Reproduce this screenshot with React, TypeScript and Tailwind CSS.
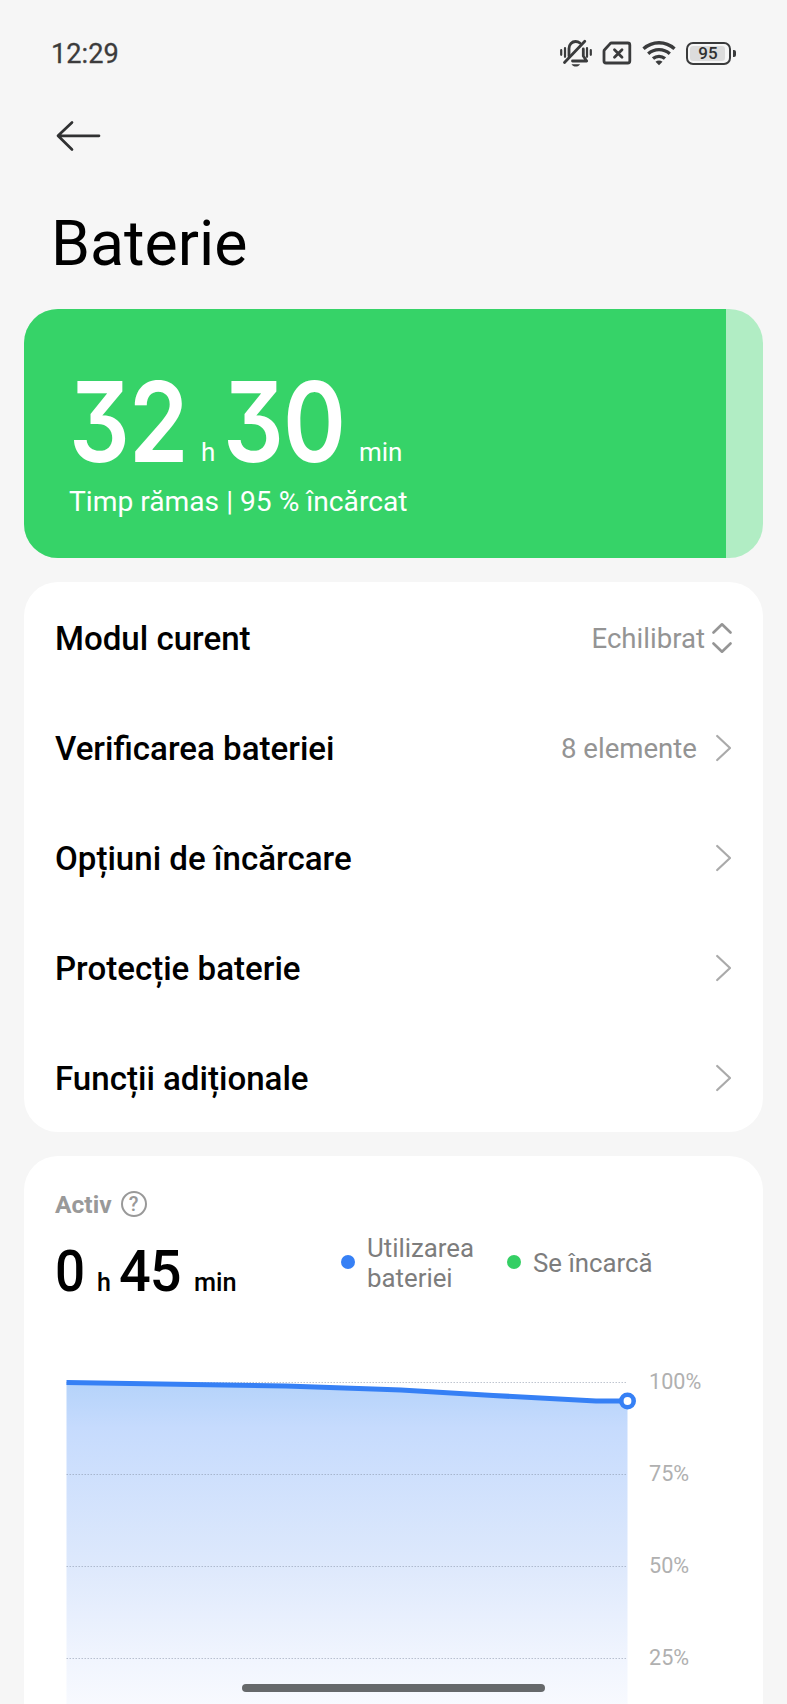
import type { ReactNode } from "react";

const ink = "#3a3b3c";

function MutedBell() {
  return (
    <svg width="34" height="30" viewBox="0 0 34 30" fill="none" stroke={ink} strokeLinecap="round">
      <path d="M2.2 12.2v4.6M6 10.2v8.6M28 10.2v8.6M31.8 12.2v4.6" strokeWidth="2.2" />
      <path d="M10 18V10.5c0-4 3-7 6.5-7 1.8 0 3.2.5 4.400 1.500" strokeWidth="2.8" />
      <path d="M13.500 23h14.200l-3.400-5V11" strokeWidth="2.8" strokeLinejoin="round" />
      <path d="M5.500 24.500L25.800 3.200" strokeWidth="2.8" />
      <path d="M12.500 26.200h8.600c-1 1.600-2.500 2.300-4.300 2.300s-3.300-.7-4.300-2.300z" fill={ink} stroke="none" />
    </svg>
  );
}

function NoSim() {
  return (
    <svg width="30" height="24" viewBox="0 0 30 24" fill="none" stroke={ink} strokeWidth="2.8">
      <path d="M9.600 2h16.200a2 2 0 0 1 2 2v16a2 2 0 0 1-2 2H4a2 2 0 0 1-2-2V10.200c0-.6.2-1 .6-1.400l5.600-6.200c.4-.4.9-.6 1.400-.6z" strokeLinejoin="round" />
      <path d="M12.500 8.800l7.500 7.500M20 8.800l-7.500 7.500" strokeWidth="2.8" strokeLinecap="round" />
    </svg>
  );
}

function Wifi() {
  return (
    <svg width="34" height="26" viewBox="0 0 34 26" fill="none" stroke={ink} strokeWidth="3.3">
      <path d="M1.500 8.800C10.300 .7 23.700 .7 32.500 8.800" />
      <path d="M6.200 13.800c6.200-5.600 15.400-5.600 21.600 0" />
      <path d="M11 18.600c3.500-3.100 8.500-3.100 12 0" />
      <path d="M13.500 21.700c2-1.700 5-1.700 7 0L17 25.300z" fill={ink} stroke="none" />
    </svg>
  );
}

function BatteryIcon() {
  return (
    <div className="flex items-center gap-[2px]">
      <div className="h-[23px] w-[45px] rounded-[7px] border-[2px] border-[#3a3b3c] p-[2px]">
        <div className="flex h-full w-[35px] items-center justify-center rounded-[3px] bg-[#dcdcdc] pl-[1px] text-[17px] font-medium leading-none text-[#303030]">
          95
        </div>
      </div>
      <div className="h-[7px] w-[3px] rounded-r-[2px] bg-[#3a3b3c]" />
    </div>
  );
}

function Chevron() {
  return (
    <svg className="mb-[2px] mr-[1px]" width="16" height="28" viewBox="0 0 16 28" fill="none" stroke="#aaaaaa" strokeWidth="2.2" strokeLinecap="round" strokeLinejoin="round">
      <path d="M2.200 2L15 14L2.200 26" />
    </svg>
  );
}

function UpDown() {
  return (
    <svg className="mb-[2px]" width="20" height="32" viewBox="0 0 20 32" fill="none" stroke="#959595" strokeWidth="2.6" strokeLinecap="round" strokeLinejoin="round">
      <path d="M1.500 10.500L10 2.300l8.500 8.200M1.500 21.500L10 29.700l8.500-8.200" />
    </svg>
  );
}

function Row({ label, children }: { label: string; children: ReactNode }) {
  return (
    <div className="flex h-[110px] items-center justify-between pt-[3px] pl-[31px] pr-[31px]">
      <span className="text-[33.1px] font-medium leading-[40px] text-black">{label}</span>
      <span className="flex items-center text-[27.6px] leading-[40px] text-[#949494]">{children}</span>
    </div>
  );
}

function BigNumber({ children }: { children: string }) {
  return (
    <span className="inline-block origin-left translate-y-[1px] scale-x-[0.86] font-['Inter'] text-[111px] font-semibold tracking-[-1px] [font-feature-settings:'cv09']">
      {children}
    </span>
  );
}

const levels = ["100%", "75%", "50%", "25%"];

function Chart() {
  return (
    <div className="flex">
      <svg width="584" height="333" viewBox="0 0 584 333" fill="none">
        <defs>
          <linearGradient id="usage" x1="0" y1="12" x2="0" y2="380" gradientUnits="userSpaceOnUse">
            <stop offset="0" stopColor="#b5d3fa" />
            <stop offset="0.12" stopColor="#c6dbfd" />
            <stop offset="0.5" stopColor="#dee9fc" />
            <stop offset="0.75" stopColor="#f1f5fe" />
            <stop offset="1" stopColor="#ffffff" />
          </linearGradient>
        </defs>
        <path d="M10.500 10.500C100 11.500 170 12.500 230 14C280 15.500 310 16.500 345 18C400 21.500 490 26.500 540 29H571.500V333H10.500z" fill="url(#usage)" />
        {[10.5, 102.5, 194.5, 286.5].map((y) => (
          <path key={y} d={`M10.500 ${y}H571`} stroke="#7f8ba0" strokeOpacity="0.5" strokeWidth="1.2" strokeDasharray="1.5 1.5" />
        ))}
        <path d="M10.500 10.500C100 11.500 170 12.500 230 14C280 15.500 310 16.500 345 18C400 21.500 490 26.500 540 29H571" stroke="#3680f5" strokeWidth="5" />
        <circle cx="571.500" cy="29" r="6.200" fill="#fff" stroke="#3680f5" strokeWidth="4.600" />
      </svg>
      <div className="flex flex-col pl-[9px]">
        {levels.map((level) => (
          <span key={level} className="h-[92px] text-[21.6px] leading-[20px] text-[#b0b0b0]">{level}</span>
        ))}
      </div>
    </div>
  );
}

export default function App() {
  return (
    <div className="relative flex h-[1704px] w-[787px] flex-col overflow-hidden bg-[#f6f6f6] font-['Roboto',sans-serif]">
      <header className="flex h-[106px] shrink-0 items-center justify-between pl-[51px] pr-[51px]">
        <span className="pt-[2px] text-[27.2px] leading-[32px] text-[#3c3c3c] [-webkit-text-stroke:0.3px_#3c3c3c]">12:29</span>
        <div className="flex items-center">
          <MutedBell />
          <div className="ml-[9px]"><NoSim /></div>
          <div className="ml-[10px] mr-[10px]"><Wifi /></div>
          <BatteryIcon />
        </div>
      </header>

      <div className="flex h-[60px] shrink-0 items-center pl-[56px]">
        <svg width="45" height="32" viewBox="0 0 45 32" fill="none" stroke="#303132" strokeWidth="2.700" strokeLinecap="round" strokeLinejoin="round">
          <path d="M43 15.800H2.300M16 2.500L2 15.800L16 29.500" />
        </svg>
      </div>

      <h1 className="mt-[36px] h-[107px] shrink-0 pl-[51px] text-[62.6px] leading-[84px] text-black">Baterie</h1>

      <section className="mx-[24px] flex h-[249px] shrink-0 overflow-hidden rounded-[34px] bg-[#b1edc4]">
        <div className="flex w-[95%] flex-col bg-[#36d368] pl-[45px] pt-[60px] text-white">
          <div className="flex h-[104px] items-baseline leading-[104px]">
            <span className="w-[132px]"><BigNumber>32</BigNumber></span>
            <span className="w-[22px] text-[26px]">h</span>
            <span className="w-[136px]"><BigNumber>30</BigNumber></span>
            <span className="text-[26px]">min</span>
          </div>
          <p className="mt-[9px] text-[28.200px] leading-[40px]">Timp rămas | 95 % încărcat</p>
        </div>
      </section>

      <section className="mx-[24px] mt-[24px] shrink-0 rounded-[34px] bg-white">
        <Row label="Modul curent">
          <span className="mr-[7px]">Echilibrat</span>
          <UpDown />
        </Row>
        <Row label="Verificarea bateriei">
          <span className="mr-[18px]">8 elemente</span>
          <Chevron />
        </Row>
        <Row label="Opțiuni de încărcare"><Chevron /></Row>
        <Row label="Protecție baterie"><Chevron /></Row>
        <Row label="Funcții adiționale"><Chevron /></Row>
      </section>

      <section className="mx-[24px] mt-[24px] flex h-[580px] shrink-0 flex-col rounded-t-[34px] bg-white">
        <div className="flex pl-[31px] pt-[33px]">
          <div className="w-[286px]">
            <div className="flex h-[30px] items-center text-[24.6px] font-bold leading-[30px] text-[#999999]">
              <span className="pt-[1px]">Activ</span>
              <span className="mb-[1px] ml-[9px] flex h-[26px] w-[26px] items-center justify-center rounded-full border-[2px] border-[#999999] text-[20px] font-medium leading-none">?</span>
            </div>
            <div className="mt-[23px] flex h-[57px] items-baseline font-medium leading-[60px] text-black">
              <span className="w-[42px]">
                <span className="inline-block origin-left scale-x-[0.93] text-[57px]">0</span>
              </span>
              <span className="w-[22px] text-[25px]">h</span>
              <span className="w-[75px]">
                <span className="inline-block origin-left scale-x-[0.98] text-[57px] tracking-[-1px]">45</span>
              </span>
              <span className="text-[25.3px]">min</span>
            </div>
          </div>
          <div className="mt-[43px] flex h-[60px] items-center text-[25.8px] leading-[30px] text-[#7d7d7d]">
            <span className="h-[14px] w-[14px] rounded-full bg-[#3680f5]" />
            <span className="ml-[12px] w-[140px] pt-[1px]">Utilizarea<br />bateriei</span>
            <span className="h-[14px] w-[14px] rounded-full bg-[#34cf64]" />
            <span className="ml-[12px] pt-[2px]">Se încarcă</span>
          </div>
        </div>
        <div className="mt-[73px] pl-[32px]"><Chart /></div>
      </section>

      <div className="absolute left-[242px] top-[1684px] h-[8px] w-[303px] rounded-full bg-[#66696b]" />
    </div>
  );
}
